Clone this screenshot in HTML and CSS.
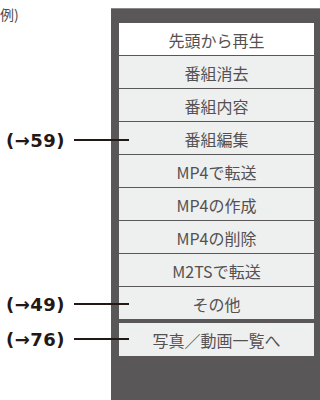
FILE: index.html
```html
<!DOCTYPE html>
<html lang="ja">
<head>
    <meta charset="UTF-8">
    <meta name="viewport" content="width=device-width, initial-scale=1.0">
    <title>メニュー表示例</title>
    <link rel="stylesheet" href="styles.css">
</head>
<body>
    <div class="page">
        <div class="caption">例)</div>

        <div class="panel">
            <ul class="menu">
                <li class="first">先頭から再生</li>
                <li>番組消去</li>
                <li>番組内容</li>
                <li>番組編集</li>
                <li>MP4で転送</li>
                <li>MP4の作成</li>
                <li>MP4の削除</li>
                <li>M2TSで転送</li>
                <li>その他</li>
            </ul>
            <div class="menu-extra">写真／動画一覧へ</div>
        </div>

        <!-- 参照ページへの引き出し線 -->
        <div class="callout callout-59"><span>(→59)</span><i class="leader"></i></div>
        <div class="callout callout-49"><span>(→49)</span><i class="leader"></i></div>
        <div class="callout callout-76"><span>(→76)</span><i class="leader"></i></div>
    </div>
</body>
</html>
```

FILE: styles.css
```css
body {
    margin: 0;
    padding: 0;
    background-color: #fff;
    font-family: 'Noto Sans CJK JP', 'Noto Sans', sans-serif;
}

.page {
    position: relative;
    width: 320px;
    height: 400px;
    overflow: hidden;
}

.caption {
    position: absolute;
    top: 4px;
    left: 0;
    font-size: 14px;
    color: #4d4949;
}

.panel {
    margin: 8px 0 0 111px;
    height: 392px;
    box-sizing: border-box;
    padding: 14px 6px 0 8px;
    background-color: #595757;
    border-top: 1px solid #8a8888;
}

.menu {
    list-style-type: none;
    margin: 0;
    padding: 0;
}

.menu li,
.menu-extra {
    height: 32px;
    line-height: 35px;
    text-align: center;
    font-size: 16px;
    color: #555151;
    background-color: #eeefef;
}

.menu li + li {
    margin-top: 1px;
}

.menu li.first {
    background-color: #fff;
}

.menu-extra {
    margin-top: 4px;
    height: 33px;
}

.callout {
    position: absolute;
    left: 6px;
    display: flex;
    align-items: center;
    height: 20px;
}

.callout span {
    font-family: 'DejaVu Sans', sans-serif;
    font-weight: bold;
    font-size: 18px;
    letter-spacing: 0.5px;
    color: #231815;
}

.leader {
    display: block;
    width: 55px;
    height: 2px;
    margin-left: 9px;
    background-color: #231815;
}

.callout-59 { top: 130px; }
.callout-49 { top: 294px; }
.callout-76 { top: 329px; }
```
